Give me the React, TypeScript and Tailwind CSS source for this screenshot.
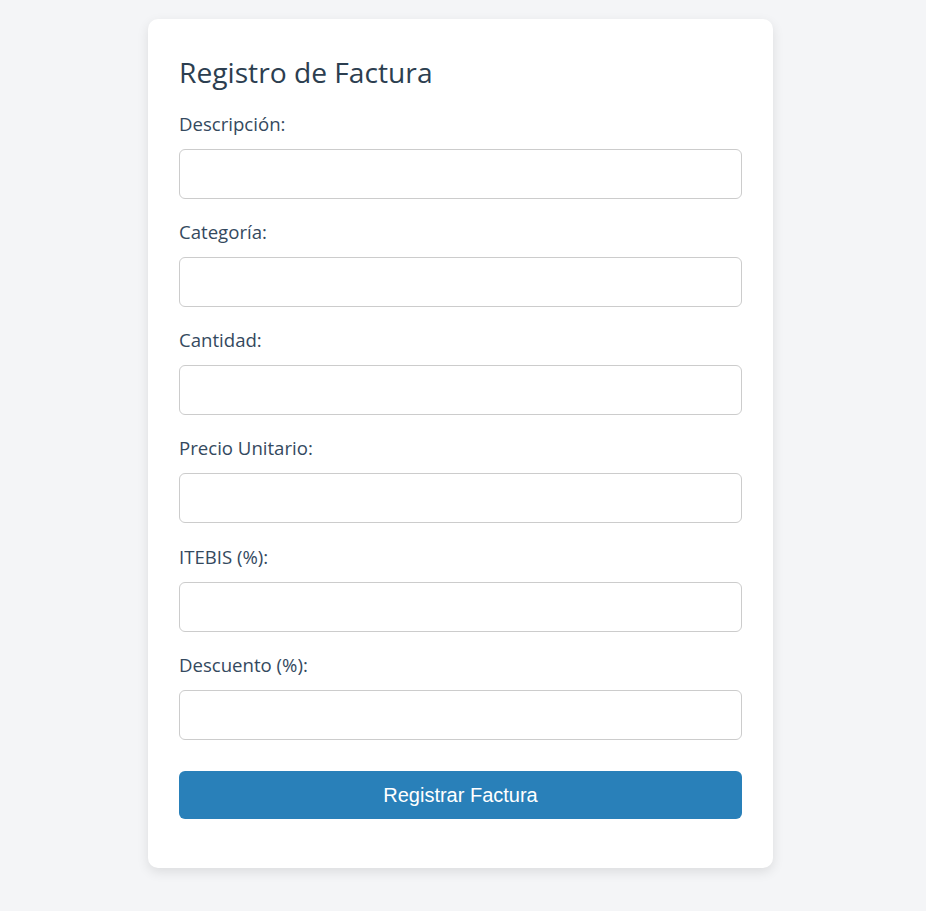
const fields = ["Descripción:", "Categoría:", "Cantidad:", "Precio Unitario:", "ITEBIS (%):", "Descuento (%):"]

export default function App() {
  return (
    <div className="min-h-[911px] bg-[#f4f5f7] pt-[19px] font-['Open_Sans',sans-serif] text-[#34495e]">
      <div className="ml-[148px] w-[625px] rounded-[10px] bg-white px-[31px] pt-8 pb-[49px] shadow-[0_4px_12px_rgba(0,0,0,0.1)]">
        <h2 className="mb-[19px] text-[28.2px] leading-[42px] text-[#2c3e50]">Registro de Factura</h2>
        <form className="flex flex-col">
          {fields.map((f) => (
            <div key={f} className="mb-[21.15px] flex flex-col">
              <label className="mb-[13px] text-[18.6px] leading-[24px]">{f}</label>
              <input type="text" className="h-[50px] w-full rounded-[6px] border border-[#cccccc] px-3 outline-none" />
            </div>
          ))}
          <button type="button" className="mt-[10px] h-[48px] w-full rounded-[6px] bg-[#2980b9] font-['Liberation_Sans',Arial,sans-serif] text-[20px] text-white">
            Registrar Factura
          </button>
        </form>
      </div>
    </div>
  )
}
